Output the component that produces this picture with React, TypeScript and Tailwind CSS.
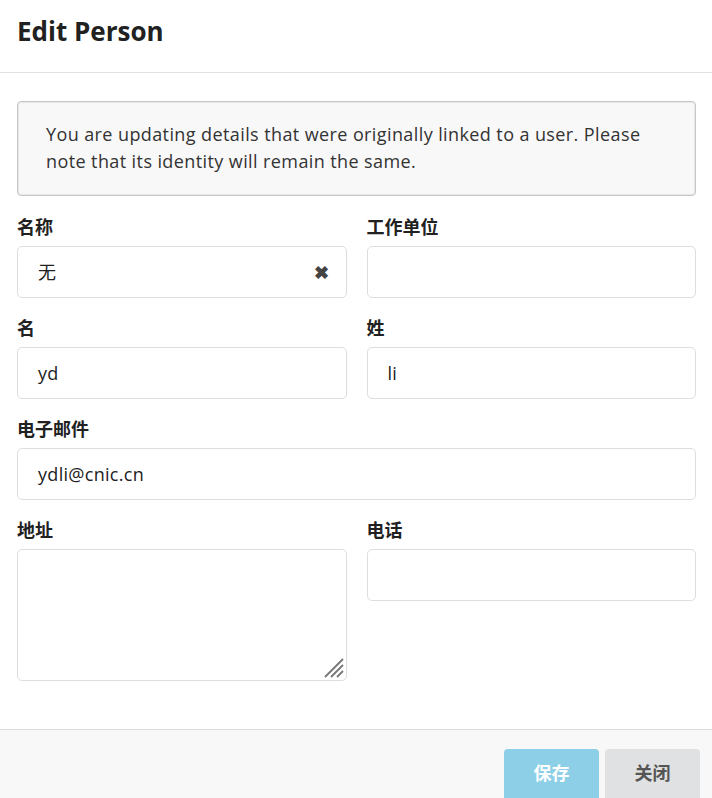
import React from 'react'

const font = { fontFamily: '"Open Sans", "Noto Sans CJK SC", sans-serif' }

function Field({ label, value, clear, className = '' }: { label: string; value?: string; clear?: boolean; className?: string }) {
  return (
    <div className={`flex flex-col ${className}`}>
      <label className="text-[18px] font-bold text-[#212121] leading-[21px] mb-[8px]">{label}</label>
      <div className="relative flex items-center h-[52px] rounded-[5px] border border-[#dedede] bg-white px-[20px] text-[18px] tracking-[0.3px] text-[#212121]">
        <span>{value}</span>
        {clear && <span className="absolute right-[16px] text-[18px] text-[#444] font-bold">✖</span>}
      </div>
    </div>
  )
}

export default function App() {
  return (
    <div className="w-[712px] h-[798px] bg-white flex flex-col" style={font}>
      <div className="h-[73px] border-b border-[#e2e2e2] px-[17px] flex items-center">
        <h1 className="text-[26px] font-bold text-[#212121] -mt-[10px]">Edit Person</h1>
      </div>

      <div className="flex-1 pl-[17px] pr-[16px] pt-[28px]">
        <div className="rounded-[4px] border border-[#c8c8c8] bg-[#f8f8f8] shadow-[inset_0_0_0_1px_#e6e6e6] px-[28px] pt-[19px] pb-[20px] text-[18px] leading-[27px] tracking-[0.4px] text-[#333]">
          You are updating details that were originally linked to a user. Please note that its identity will remain the same.
        </div>

        <div className="grid grid-cols-2 gap-x-[20px] gap-y-[20px] mt-[21px]">
          <Field label="名称" value="无" clear />
          <Field label="工作单位" />
          <Field label="名" value="yd" />
          <Field label="姓" value="li" />
          <Field label="电子邮件" value="ydli@cnic.cn" className="col-span-2" />
          <div className="flex flex-col">
            <label className="text-[18px] font-bold text-[#212121] leading-[21px] mb-[8px]">地址</label>
            <div className="relative h-[132px] rounded-[5px] border border-[#dedede] bg-white">
              <svg className="absolute right-[2px] bottom-[2px]" width="22" height="22" viewBox="0 0 22 22">
                <path d="M21 3 L3 21 M21 9 L9 21 M21 15 L15 21" stroke="#777" strokeWidth="1.8" />
              </svg>
            </div>
          </div>
          <Field label="电话" />
        </div>
      </div>

      <div className="h-[69px] border-t border-[#dcdcdc] bg-[#f8f8f8] flex justify-end items-end gap-[6px] pr-[12px]">
        <button className="w-[95px] h-[49px] rounded-t-[4px] bg-[#8ccfe6] text-white font-bold text-[18px]">保存</button>
        <button className="w-[95px] h-[49px] rounded-t-[4px] bg-[#e0e1e2] text-[#555] font-bold text-[18px]">关闭</button>
      </div>
    </div>
  )
}
